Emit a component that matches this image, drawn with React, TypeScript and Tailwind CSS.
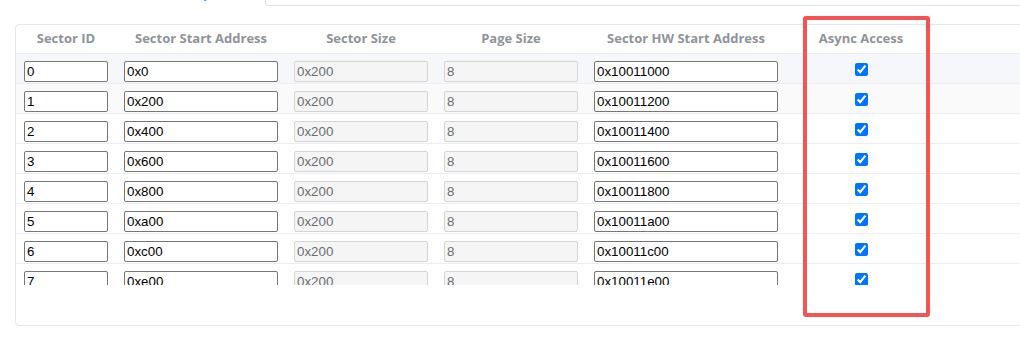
import React from "react";

const rows = [
  { id: "0", start: "0x0", hw: "0x10011000" },
  { id: "1", start: "0x200", hw: "0x10011200" },
  { id: "2", start: "0x400", hw: "0x10011400" },
  { id: "3", start: "0x600", hw: "0x10011600" },
  { id: "4", start: "0x800", hw: "0x10011800" },
  { id: "5", start: "0xa00", hw: "0x10011a00" },
  { id: "6", start: "0xc00", hw: "0x10011c00" },
  { id: "7", start: "0xe00", hw: "0x10011e00" },
];

const inputBase =
  "h-[21px] border rounded-[2px] px-[2px] py-[1px] text-[13.333px] leading-[17px] outline-none";
const enabled = `${inputBase} border-[#767676] bg-white text-black`;
const disabled = `${inputBase} border-[#d4d4d4] bg-[#f5f5f5] text-[#6d6d6d]`;

function Header({ w, label }: { w: string; label: string }) {
  return (
    <div className={`${w} shrink-0 flex items-center justify-center`}>
      {label}
    </div>
  );
}

export default function App() {
  return (
    <div
      className="relative w-[1020px] h-[353px] overflow-hidden bg-white"
      style={{ fontFamily: '"Liberation Sans", Arial, sans-serif' }}
    >
      {/* top strip */}
      <div className="flex h-[24px] items-start">
        <div className="w-[265px] h-[3px] overflow-hidden relative shrink-0">
          <span className="absolute left-[160px] top-[-17px] text-[14px] leading-[20px] text-[#409eff]">
            Memory
          </span>
        </div>
        <div className="w-[800px] h-[6px] border-l border-b border-[#dcdfe6] rounded-bl-[4px] shrink-0" />
      </div>

      {/* card */}
      <div className="ml-[15px] w-[1030px] h-[302px] border border-[#e4e7ed] rounded-[4px]">
        <div className="h-[260px] overflow-hidden">
          <div
            className="flex h-[29px] border-b border-[#ebeef5] text-[13px] font-bold text-[#909399]"
            style={{ fontFamily: '"Open Sans", "Noto Sans", sans-serif' }}
          >
            <Header w="w-[100px]" label="Sector ID" />
            <Header w="w-[170px]" label="Sector Start Address" />
            <Header w="w-[150px]" label="Sector Size" />
            <Header w="w-[150px]" label="Page Size" />
            <Header w="w-[200px]" label="Sector HW Start Address" />
            <Header w="w-[150px]" label="Async Access" />
          </div>
          {rows.map((r, i) => (
            <div
              key={r.id}
              className={`flex h-[30px] border-b border-[#ebeef5] pt-[5px] ${
                i === 0 ? "bg-[#f5f7fa]" : i === 1 ? "bg-[#fafafa]" : "bg-white"
              }`}
            >
              <div className="w-[100px] shrink-0 px-2">
                <input className={`${enabled} w-[84px]`} defaultValue={r.id} />
              </div>
              <div className="w-[170px] shrink-0 px-2">
                <input className={`${enabled} w-[154px]`} defaultValue={r.start} />
              </div>
              <div className="w-[150px] shrink-0 px-2">
                <input className={`${disabled} w-[134px]`} defaultValue="0x200" disabled />
              </div>
              <div className="w-[150px] shrink-0 px-2">
                <input className={`${disabled} w-[134px]`} defaultValue="8" disabled />
              </div>
              <div className="w-[200px] shrink-0 px-2">
                <input className={`${enabled} w-[184px]`} defaultValue={r.hw} />
              </div>
              <div className="w-[150px] shrink-0 flex justify-center pt-[4px]">
                <input
                  type="checkbox"
                  defaultChecked
                  className="w-[13px] h-[13px] m-0 accent-[#0075ff]"
                />
              </div>
            </div>
          ))}
        </div>
      </div>

      {/* annotation box */}
      <div className="absolute left-[803px] top-[16px] w-[127px] h-[301px] border-[4px] border-[#f45454] rounded-[3px] pointer-events-none" />
    </div>
  );
}
